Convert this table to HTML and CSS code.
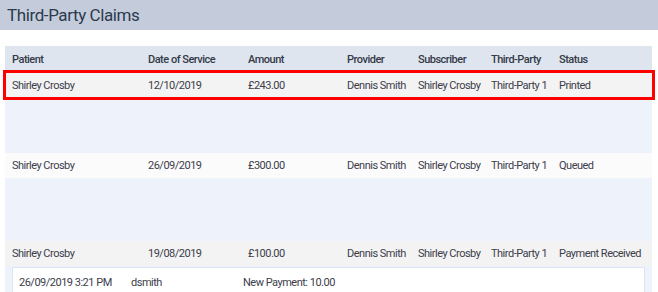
FILE: index.html
```html
<!DOCTYPE html>
<html>
  <head>
    <title>Third-Party Claims</title>
    <link rel="stylesheet" href="styles.css">
  </head>
  <body>
    <div class="titlebar"><h1>Third-Party Claims</h1></div>
    <div class="claims">
      <div class="row head">
        <div>Patient</div><div>Date of Service</div><div>Amount</div><div>Provider</div><div>Subscriber</div><div>Third-Party</div><div>Status</div>
      </div>

      <div class="row grey selected">
        <div>Shirley Crosby</div><div>12/10/2019</div><div>£243.00</div><div>Dennis Smith</div><div>Shirley Crosby</div><div>Third-Party 1</div><div>Printed</div>
      </div>
      <div class="spacer s1"></div>

      <div class="row white">
        <div>Shirley Crosby</div><div>26/09/2019</div><div>£300.00</div><div>Dennis Smith</div><div>Shirley Crosby</div><div>Third-Party 1</div><div>Queued</div>
      </div>
      <div class="spacer s2"></div>

      <div class="row grey">
        <div>Shirley Crosby</div><div>19/08/2019</div><div>£100.00</div><div>Dennis Smith</div><div>Shirley Crosby</div><div>Third-Party 1</div><div>Payment Received</div>
      </div>
      <div class="history">
        <div class="entry"><div>26/09/2019 3:21 PM</div><div>dsmith</div><div>New Payment: 10.00</div></div>
      </div>
    </div>
  </body>
</html>
```

FILE: styles.css
```css
html, body {
  margin: 0;
  background: #fff;
  font-family: Roboto, "Liberation Sans", sans-serif;
  color: #3b3d4a;
  overflow: hidden;
}

.titlebar {
  background: #c4ccdb;
  height: 30px;
  padding-left: 7px;
  display: flex;
  align-items: center;
}
.titlebar h1 {
  margin: 0;
  font-size: 17px;
  letter-spacing: -0.4px;
  font-weight: 400;
  color: #2c3a4d;
}

.claims {
  margin: 16px 6px 0 5px;
  background: #edf2fb;
  font-size: 11px;
  letter-spacing: -0.5px;
  white-space: nowrap;
}

.row {
  display: grid;
  grid-template-columns: 136px 100px 99px 71px 73px 68px 1fr;
  align-items: center;
  padding-left: 7px;
  height: 25px;
}
.row.head {
  background: #dfe5ee;
  font-weight: 500;
  height: 26px;
  color: #333a48;
}
.row.grey { background: #f3f3f3; }
.row.white { background: #fbfbfc; }

.row.selected { position: relative; height: 26px; }
.row.selected::after {
  content: "";
  position: absolute;
  top: -2px; bottom: -2px; left: -2px; right: -3px;
  border: 3px solid #f00;
}

.spacer.s1 { height: 55px; }
.spacer.s2 { height: 63px; }

.history {
  padding: 1px 7px 10px 7px;
}
.history .entry {
  background: #fff;
  border: 1px solid #dde5f3;
  display: grid;
  grid-template-columns: 112px 112px 1fr;
  align-items: center;
  height: 28px;
  padding-left: 6px;
}
```
